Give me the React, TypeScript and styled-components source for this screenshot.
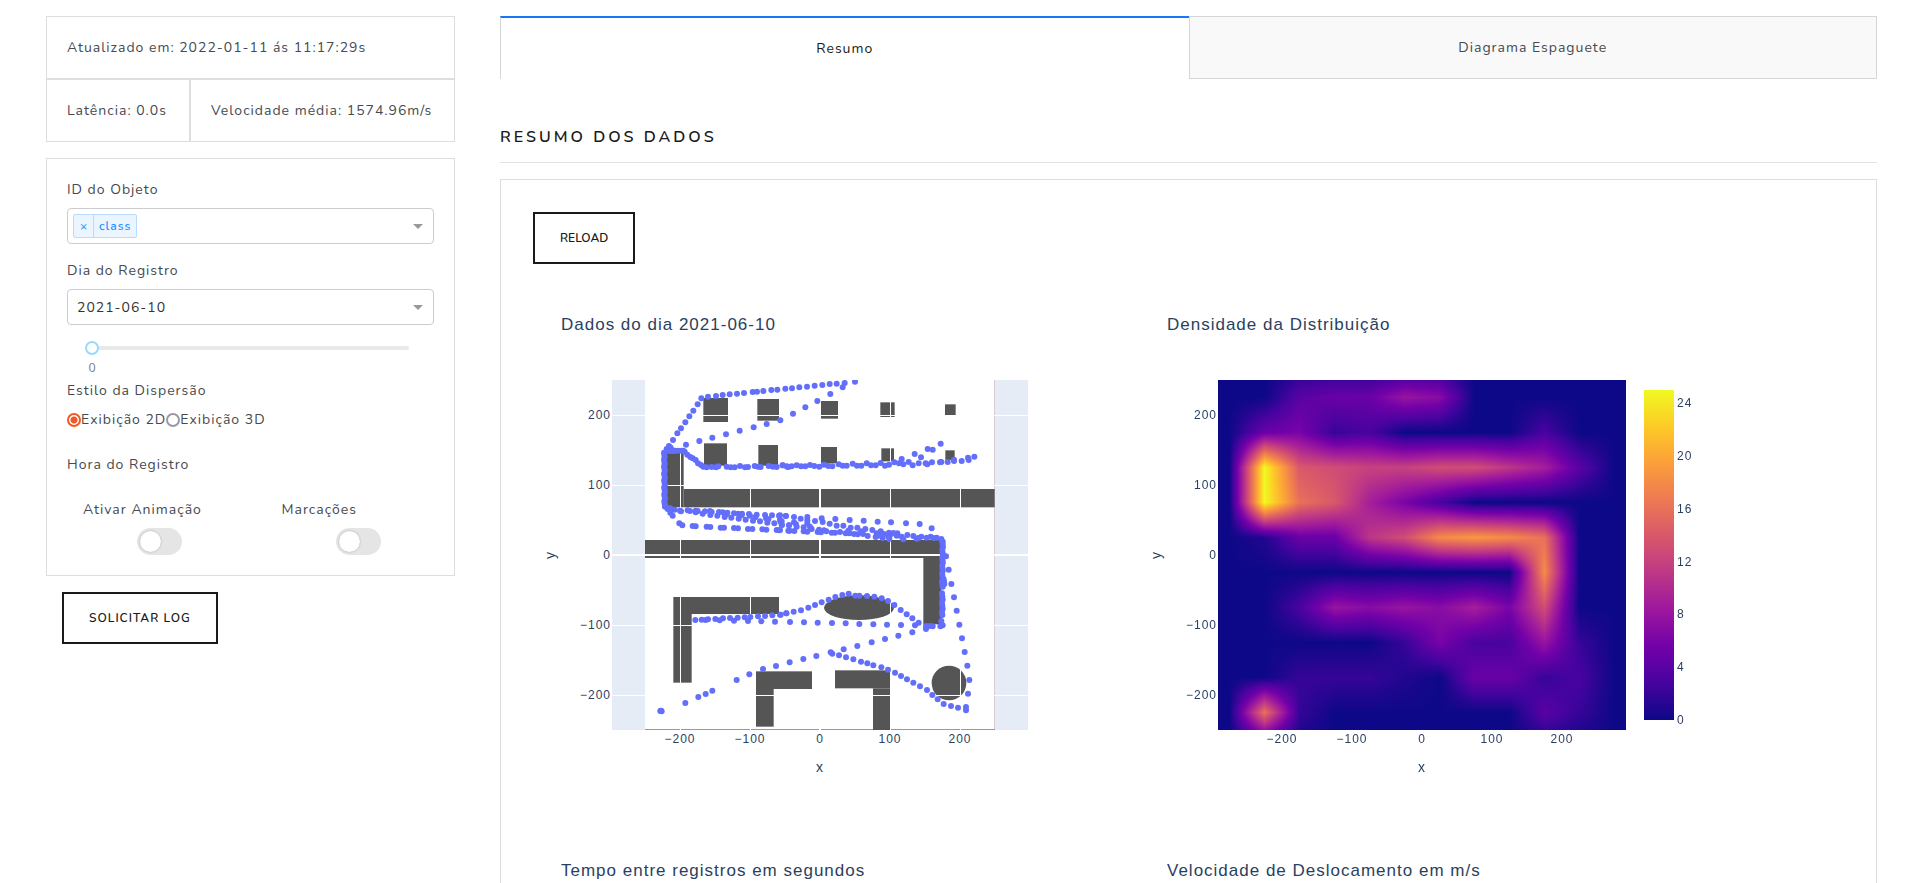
import React, { useLayoutEffect, useRef, useState } from "react";
import styled, { createGlobalStyle } from "styled-components";

const GlobalStyle = createGlobalStyle`
  *, *::before, *::after { box-sizing: border-box; }
  body {
    margin: 0;
    background: #fff;
    color: #454a50;
    font-family: Nunito, "Nunito Sans", Lato, "Open Sans", sans-serif;
    font-size: 14px;
    line-height: 21px;
    letter-spacing: 1px;
  }
`;

const Page = styled.div`
  height: 100vh;
  overflow: auto;
  scrollbar-width: none;
  display: grid;
  grid-template-columns: 409fr 1377fr;
  gap: 45px;
  align-items: start;
  padding: 16px 31px 0 46px;
`;

const Sidebar = styled.aside`
  display: flex;
  flex-direction: column;
  align-items: stretch;
`;

const StatusRow = styled.div`
  display: flex;
`;

const StatusCell = styled.div<{ $grow?: boolean }>`
  flex: ${(p) => (p.$grow ? "1 1 auto" : "0 0 144px")};
  border: 1px solid #dedede;
  padding: 20px;
  white-space: nowrap;
`;

const FilterCard = styled.form`
  margin-top: 16px;
  border: 1px solid #dedede;
  padding: 20px;
`;

const Label = styled.label`
  display: block;
  margin-bottom: 8px;
`;

const Legend = styled.legend`
  padding: 0;
  margin-bottom: 8px;
`;

const Field = styled.div`
  position: relative;
  margin-bottom: 16px;
`;

const SelectBox = styled.div`
  position: relative;
  display: grid;
`;

const Select = styled.select`
  appearance: none;
  width: 100%;
  height: 36px;
  border: 1px solid #ccc;
  border-radius: 4px;
  background: #fff;
  padding: 0 32px 0 9px;
  color: #333;
  font: inherit;
  letter-spacing: inherit;
`;

const Arrow = styled.span`
  position: absolute;
  right: 11px;
  top: 16px;
  border: 5px solid transparent;
  border-top-color: #999;
  border-bottom-width: 0;
  pointer-events: none;
`;

const Chip = styled.span`
  position: absolute;
  left: 6px;
  top: 6px;
  display: flex;
  height: 24px;
  border: 1px solid #b8dbff;
  border-radius: 2px;
  background: #ebf5ff;
  color: #2a91ff;
  font-size: 12px;
  font-weight: 600;
  line-height: 22px;
`;

const ChipRemove = styled.button`
  width: 20px;
  border: 0;
  border-right: 1px solid #b8dbff;
  background: none;
  color: inherit;
  font: inherit;
  padding: 0;
`;

const ChipText = styled.span`
  padding: 0 5px;
`;

const SliderBox = styled.div`
  height: 39px;
  padding: 0 25px 0 18px;
`;

const Slider = styled.input`
  display: block;
  appearance: none;
  width: 100%;
  height: 14px;
  margin: 0;
  background: none;
  &::-webkit-slider-runnable-track {
    height: 4px;
    border-radius: 2px;
    background: #e9e9e9;
  }
  &::-webkit-slider-thumb {
    appearance: none;
    width: 14px;
    height: 14px;
    margin-top: -5px;
    border: 2px solid #96dbfa;
    border-radius: 50%;
    background: #fff;
  }
`;

const SliderMark = styled.output`
  display: block;
  width: 14px;
  padding-top: 5px;
  text-align: center;
  font-size: 12px;
  line-height: 16px;
  color: #777;
  letter-spacing: 0;
`;

const RadioGroup = styled.fieldset`
  border: 0;
  margin: 0 0 24px;
  padding: 0;
  min-width: 0;
`;

const RadioRow = styled.div`
  display: flex;
`;

const RadioLabel = styled.label`
  display: flex;
  align-items: center;
`;

const Radio = styled.input`
  appearance: none;
  width: 14px;
  height: 14px;
  margin: 0;
  border: 2px solid #9b97a6;
  border-radius: 50%;
  background: #fff;
  &:checked {
    border-color: #f15a24;
    background: radial-gradient(circle, #f15a24 0 3px, #fff 4px);
  }
`;

const ToggleSection = styled.fieldset`
  border: 0;
  margin: 0;
  padding: 0;
  min-width: 0;
`;

const ToggleRow = styled.div`
  display: grid;
  grid-template-columns: 1fr 1fr;
  margin: 16px -15px 0;
`;

const ToggleCell = styled.div`
  padding: 0 0 0 31px;
`;

const Toggle = styled.input`
  appearance: none;
  display: block;
  width: 45px;
  height: 27px;
  margin: 0 0 0 54px;
  border-radius: 14px;
  background: #e5e5e5;
  &::before {
    content: "";
    display: block;
    width: 21px;
    height: 21px;
    margin: 3px;
    border-radius: 50%;
    background: #fff;
    box-shadow: 0 0 2px rgba(0, 0, 0, 0.3);
  }
  &:checked { background: #1f78ff; }
  &:checked::before { margin-left: 21px; }
`;

const Button = styled.button<{ $spaced?: boolean }>`
  align-self: flex-start;
  height: 52px;
  border: 2px solid #1a1a1a;
  background: #fff;
  color: #1a1a1a;
  padding: 0 25px;
  font-family: inherit;
  font-size: 12px;
  font-weight: 600;
  line-height: 18px;
  text-transform: uppercase;
  letter-spacing: ${(p) => (p.$spaced ? "1px" : "normal")};
`;

const SidebarAction = styled.div`
  padding: 16px;
`;

const Main = styled.main`
  min-width: 0;
`;

const Tabs = styled.div`
  display: grid;
  grid-template-columns: 1fr 1fr;
`;

const Tab = styled.button<{ $active?: boolean }>`
  height: 63px;
  border: 1px solid #d6d6d6;
  background: ${(p) => (p.$active ? "#fff" : "#f9f9f9")};
  color: ${(p) => (p.$active ? "#1a1a1a" : "#454a50")};
  font: inherit;
  letter-spacing: inherit;
  padding: 0;
  ${(p) =>
    p.$active &&
    "border-top: 2px solid #1975fa; border-right: 0; border-bottom: 0;"}
`;

const SectionTitle = styled.h5`
  margin: 0;
  padding: 46px 0 13px;
  border-bottom: 1px solid #e3e3e3;
  color: #1a1a1a;
  font-size: 16px;
  font-weight: 600;
  line-height: 24px;
  letter-spacing: 3px;
`;

const Card = styled.section`
  margin-top: 16px;
  border: 1px solid #dedede;
  padding: 32px;
`;

const Charts = styled.div`
  display: flex;
  flex-wrap: wrap;
  margin-top: 16px;
`;

const Figure = styled.figure`
  flex: 0 0 606px;
  margin: 0;
  min-height: 546px;
`;

const Caption = styled.figcaption`
  padding: 34px 0 0 28px;
  color: #2a3f5f;
  font-family: "Liberation Sans", Arial, sans-serif;
  font-size: 17px;
  line-height: 22px;
`;

const Plot = styled.svg`
  display: block;
  width: 606px;
  height: 490px;
`;

const Tick = styled.text`
  fill: #2a3f5f;
  font-family: "Liberation Sans", Arial, sans-serif;
  font-size: 12px;
`;

const AxisTitle = styled(Tick)`
  font-size: 14px;
`;

type Point = [number, number];

const shift = (dx: number, dy: number, values: number[]): Point[] => {
  const out: Point[] = [];
  for (let i = 0; i < values.length; i += 2) out.push([values[i] + dx, values[i + 1] + dy]);
  return out;
};

const run = (x0: number, y0: number, x1: number, y1: number, n: number): Point[] =>
  Array.from({ length: n }, (_, i) => [
    x0 + ((x1 - x0) * i) / (n - 1) + (i % 3) - 1,
    y0 + ((y1 - y0) * i) / (n - 1),
  ]);

// Recorded positions, in thirds of a pixel, stored per quadrant of the floor plan.
const positions: Point[] = [
  ...shift(-246, -60, [
    417, 258, 429, 240, 442, 220, 453, 205, 466, 187, 478, 169, 490, 152, 503, 133, 514, 115, 534, 110,
    558, 108, 578, 105, 599, 103, 621, 101, 642, 99, 668, 96, 681, 95, 700, 93, 724, 90, 742, 89, 766, 86,
    710, 192, 671, 202, 629, 212, 588, 223, 547, 233, 508, 243, 468, 254, 751, 181,
    410, 267, 422, 263, 427, 271, 464, 275, 472, 284, 481, 291, 488, 295, 497, 300, 504, 310, 513, 315,
    520, 320, 530, 322, 545, 321, 558, 322, 565, 319, 590, 320, 602, 322, 614, 322, 630, 318, 645, 322,
    654, 321, 674, 318, 684, 320, 692, 321, 716, 318, 729, 320, 740, 321, 758, 316, 770, 319, 775, 321,
    413, 447, 421, 458, 428, 467, 448, 490, 457, 496, 488, 498, 497, 499, 530, 500, 541, 501, 572, 503,
    582, 503, 612, 504, 624, 505, 654, 507, 667, 507, 697, 508, 709, 509, 740, 510, 748, 511, 779, 512,
    421, 445, 434, 449, 450, 452, 473, 451, 480, 453, 497, 452, 503, 453, 525, 454, 540, 453, 545, 456,
    567, 456, 578, 457, 592, 458, 612, 460, 624, 461, 636, 461, 657, 462, 680, 464, 705, 465, 726, 466,
    747, 467, 768, 468, 453, 454, 497, 457, 518, 461, 541, 465, 562, 467, 584, 471, 604, 473, 626, 476,
    647, 479, 669, 482, 690, 484, 712, 488, 733, 490, 755, 494, 777, 496, 676, 472, 708, 475, 715, 478,
    750, 480, 755, 484, 660, 467, 635, 466, 590, 463,
  ]),
  ...shift(504, -60, [
    36, 85, 58, 82, 81, 80, 104, 77, 127, 75, 149, 72, 170, 71, 194, 69, 188, 82, 225, 65, 151, 102,
    112, 123, 76, 142, 39, 161,
    8, 316, 22, 320, 35, 319, 50, 316, 63, 319, 76, 319, 90, 315, 103, 318, 118, 320, 132, 314, 145, 318,
    157, 319, 176, 313, 188, 317, 200, 317, 218, 311, 231, 317, 244, 317, 260, 310, 273, 316, 287, 316,
    302, 309, 315, 317, 327, 314, 343, 307, 357, 310, 370, 313, 386, 306, 398, 316, 416, 310, 437, 310,
    442, 313, 456, 307, 480, 307, 484, 306, 503, 306, 522, 303, 522, 299, 545, 303, 564, 293, 566, 300,
    583, 290, 365, 297, 404, 282, 423, 292, 443, 267, 458, 269, 482, 251,
    0, 510, 25, 512, 43, 513, 71, 514, 82, 515, 113, 516, 123, 517, 139, 514, 155, 518, 165, 518, 180, 516,
    197, 520, 208, 520, 222, 522, 233, 523, 249, 522, 263, 528, 287, 531, 308, 534, 328, 537, 370, 538,
    410, 536, 0, 466, 17, 468, 42, 471, 62, 476, 82, 471, 82, 481, 105, 483, 125, 475, 128, 486, 149, 491,
    166, 477, 170, 497, 190, 497, 209, 480, 212, 503, 232, 503, 251, 482, 256, 507, 277, 510, 293, 485,
    302, 514, 333, 487, 327, 518, 352, 520, 378, 490, 382, 525, 419, 492, 424, 530, 455, 505,
    2, 485, 6, 495, 27, 496, 42, 487, 48, 493, 50, 500, 71, 502, 82, 490, 90, 500, 95, 507, 117, 509,
    132, 511, 205, 512, 243, 514, 290, 520, 312, 522, 330, 526, 350, 527, 365, 530, 400, 528, 415, 534,
    295, 527, 325, 530, 340, 519, 440, 533, 452, 530, 460, 534, 470, 533, 484, 537, 488, 545,
    498, 589, 506, 629, 514, 672, 522, 712, 530, 752,
  ]),
  ...shift(-246, 510, [
    738, 348, 699, 357, 658, 373, 620, 390, 547, 422, 527, 432, 505, 441, 466, 459, 393, 482, 391, 483,
    395, 484, 496, 210, 515, 209, 527, 210, 534, 208, 556, 207, 569, 211, 579, 205, 600, 204, 612, 212,
    623, 203, 644, 202, 654, 213, 661, 201, 684, 199, 694, 214, 705, 198, 727, 196, 735, 215, 750, 194,
    769, 190,
  ]),
  ...shift(504, 510, [
    538, 224, 546, 265, 554, 306, 562, 347, 568, 390, 564, 431, 558, 471, 558, 481, 534, 473, 513, 468,
    491, 462, 473, 448, 457, 435, 441, 420, 420, 409, 400, 398, 381, 388, 363, 378, 345, 368, 324, 359,
    304, 352, 280, 346, 262, 340, 243, 335, 220, 328, 198, 322, 177, 316, 157, 311, 152, 307, 191, 298,
    232, 288, 275, 277, 315, 267, 355, 257, 397, 247, 438, 237, 438, 228, 448, 228, 458, 229, 405, 226,
    416, 218, 397, 205, 380, 193, 362, 180, 343, 165, 324, 153, 305, 145, 283, 140, 261, 138, 238, 137,
    226, 137, 206, 131, 187, 135, 166, 141, 146, 149, 125, 157, 105, 165, 85, 173, 63, 181, 41, 185,
    19, 190, 2, 194, 30, 216, 72, 217, 113, 218, 156, 219, 197, 220, 238, 222, 280, 223, 321, 224,
    363, 225, 109, 318, 70, 327, 29, 337, 484, 213, 488, 226, 481, 229,
  ]),
  ...run(165, 213, 215, 212, 7),
  ...run(157, 218, 158, 377, 24),
  ...run(160, 380, 172, 388, 3),
  ...run(992, 485, 991, 620, 18),
  ...run(991, 640, 991, 705, 8),
  ...run(996, 598, 996, 612, 3),
];

// x, y, width, height of each wall and pillar
const walls: number[][] = [
  [274, 54, 74, 72], [436, 57, 65, 65], [627, 63, 51, 53], [805, 67, 43, 44], [999, 73, 32, 32],
  [276, 190, 69, 67], [439, 195, 59, 62], [627, 201, 48, 49], [808, 205, 38, 39], [1000, 211, 28, 29],
  [159, 218, 56, 164], [215, 327, 933, 55], [99, 480, 895, 54], [934, 534, 54, 199],
  [184, 651, 317, 51], [184, 702, 55, 206], [432, 874, 168, 53], [432, 927, 53, 113],
  [669, 871, 165, 54], [783, 925, 51, 125],
];

const xTicks = [-200, -100, 0, 100, 200];
const yTicks = [200, 100, 0, -100, -200];
const fmt = (v: number) => String(v).replace("-", "\u2212");

function Axes({ center }: { center: number }) {
  return (
    <>
      {yTicks.map((v) => (
        <Tick key={v} x={78} y={223 - v * 0.7} textAnchor="end">{fmt(v)}</Tick>
      ))}
      {xTicks.map((v) => (
        <Tick key={v} x={center + v * 0.7} y={407} textAnchor="middle">{fmt(v)}</Tick>
      ))}
      <AxisTitle x={center} y={436} textAnchor="middle">x</AxisTitle>
      <AxisTitle transform="translate(22 219) rotate(-90)" textAnchor="middle">y</AxisTitle>
    </>
  );
}

function ScatterPlot() {
  return (
    <Plot viewBox="0 0 606 490" role="img" aria-label="Dados do dia 2021-06-10">
      <svg x="79" y="44" width="416" height="350" viewBox="0 0 1248 1050">
        <rect width="1248" height="1050" fill="#e5ecf6" />
        <rect x="99" width="1047" height="1050" fill="#fff" />
        <rect x="1146" width="3" height="1050" fill="#d6ccd2" />
        <rect x="99" y="1047" width="1050" height="3" fill="#999" />
        <g fill="#555">
          {walls.map(([x, y, w, h], i) => (
            <rect key={i} x={x} y={y} width={w} height={h} />
          ))}
          <ellipse cx="741" cy="683" rx="105" ry="37" />
          <circle cx="1011" cy="909" r="52" />
        </g>
        <g stroke="#fff" strokeWidth="3">
          {[205, 415, 835, 1045].map((x) => <path key={x} d={`M${x + 0.5} 0V1050`} />)}
          {[106, 316, 736, 946].map((y) => <path key={y} d={`M0 ${y + 0.5}H1248`} />)}
          <path d="M624 0V1050M0 525H1248" strokeWidth="6" />
        </g>
        <g fill="#636efa">
          {positions.map(([x, y], i) => <circle key={i} cx={x} cy={y} r="9" />)}
        </g>
      </svg>
      <Axes center={287} />
    </Plot>
  );
}

const plasma = [
  [13, 8, 135], [70, 3, 159], [114, 1, 168], [156, 23, 158], [189, 55, 134],
  [216, 87, 107], [237, 121, 83], [251, 159, 58], [253, 202, 38], [240, 249, 33],
];

// Counts per 50-unit bin; columns from x = -325 to 325, rows from y = 275 down to -275.
const density = [
  [0, 0, 0, 0, 0, 0, 0, 0, 0, 0, 0, 0, 0, 0],
  [0, 0, 0, 4, 5, 5, 8, 7, 0, 0, 0, 0, 0, 0],
  [0, 0, 5, 6, 2, 3, 0, 0, 0, 0, 3, 0, 0, 0],
  [0, 0, 25, 14, 13, 12, 12, 13, 13, 11, 9, 4, 0, 0],
  [0, 0, 25, 16, 14, 9, 6, 3, 0, 0, 0, 0, 0, 0],
  [0, 0, 1, 5, 5, 11, 13, 18, 19, 18, 16, 0, 0, 0],
  [0, 0, 0, 0, 0, 0, 0, 0, 0, 0, 18, 0, 0, 0],
  [0, 0, 0, 3, 8, 7, 8, 7, 9, 6, 13, 0, 0, 0],
  [0, 0, 0, 0, 0, 0, 2, 6, 3, 3, 8, 2, 0, 0],
  [0, 0, 0, 2, 2, 2, 1, 0, 5, 5, 2, 3, 0, 0],
  [0, 0, 16, 2, 0, 0, 0, 0, 0, 0, 4, 2, 0, 0],
  [0, 0, 0, 0, 0, 0, 0, 0, 0, 0, 0, 0, 0, 0],
];

function colorAt(z: number): number[] {
  const t = Math.max(0, Math.min(8.999, (z / 25) * 9));
  const i = Math.floor(t);
  return plasma[i].map((c, k) => c + (plasma[i + 1][k] - c) * (t - i));
}

const HeatCanvas = styled.canvas`
  display: block;
`;

function Heatmap({ width, height }: { width: number; height: number }) {
  const ref = useRef<HTMLCanvasElement>(null);
  useLayoutEffect(() => {
    const ctx = ref.current?.getContext("2d");
    if (!ctx) return;
    const image = ctx.createImageData(width, height);
    for (let py = 0; py < height; py++) {
      const gy = (275 - (height / 2 - py - 0.5) / 0.7) / 50;
      const r = Math.floor(gy);
      const fy = gy - r;
      for (let px = 0; px < width; px++) {
        const gx = ((px + 0.5 - width / 2) / 0.7 + 325) / 50;
        const c = Math.floor(gx);
        const fx = gx - c;
        const top = density[r][c] * (1 - fx) + density[r][c + 1] * fx;
        const bottom = density[r + 1][c] * (1 - fx) + density[r + 1][c + 1] * fx;
        const rgb = colorAt(top * (1 - fy) + bottom * fy);
        image.data.set([rgb[0], rgb[1], rgb[2], 255], (py * width + px) * 4);
      }
    }
    ctx.putImageData(image, 0, 0);
  }, [width, height]);
  return <HeatCanvas ref={ref} width={width} height={height} />;
}

function DensityPlot() {
  return (
    <Plot viewBox="0 0 606 490" role="img" aria-label="Densidade da Distribuição">
      <defs>
        <linearGradient id="plasma" x1="0" y1="1" x2="0" y2="0">
          {plasma.map((c, i) => (
            <stop key={i} offset={i / 9} stopColor={`rgb(${c.join(",")})`} />
          ))}
        </linearGradient>
      </defs>
      <foreignObject x="79" y="44" width="408" height="350">
        <Heatmap width={408} height={350} />
      </foreignObject>
      <rect x="505" y="54" width="30" height="330" fill="url(#plasma)" />
      {[0, 4, 8, 12, 16, 20, 24].map((v) => (
        <Tick key={v} x={538} y={388 - v * 13.2}>{v}</Tick>
      ))}
      <Axes center={283} />
    </Plot>
  );
}

export default function App() {
  const [mode, setMode] = useState("2d");
  const [step, setStep] = useState(0);
  return (
    <>
      <GlobalStyle />
      <Page>
        <Sidebar>
          <StatusRow>
            <StatusCell $grow>Atualizado em: 2022-01-11 ás 11:17:29s</StatusCell>
          </StatusRow>
          <StatusRow>
            <StatusCell>Latência: 0.0s</StatusCell>
            <StatusCell $grow>Velocidade média: 1574.96m/s</StatusCell>
          </StatusRow>
          <FilterCard>
            <Field>
              <Label htmlFor="object">ID do Objeto</Label>
              <SelectBox>
                <Select id="object" defaultValue="">
                  <option value="" aria-label="class" />
                </Select>
                <Chip>
                  <ChipRemove type="button" aria-label="Remover class">×</ChipRemove>
                  <ChipText>class</ChipText>
                </Chip>
                <Arrow />
              </SelectBox>
            </Field>
            <Field>
              <Label htmlFor="day">Dia do Registro</Label>
              <SelectBox>
                <Select id="day">
                  <option>2021-06-10</option>
                </Select>
                <Arrow />
              </SelectBox>
            </Field>
            <SliderBox>
              <Slider
                id="step"
                type="range"
                min={0}
                max={10}
                value={step}
                aria-label="Intervalo"
                onChange={(e) => setStep(Number(e.target.value))}
              />
              <SliderMark htmlFor="step">{step}</SliderMark>
            </SliderBox>
            <RadioGroup>
              <Legend>Estilo da Dispersão</Legend>
              <RadioRow>
                <RadioLabel>
                  <Radio type="radio" name="mode" checked={mode === "2d"} onChange={() => setMode("2d")} />
                  Exibição 2D
                </RadioLabel>
                <RadioLabel>
                  <Radio type="radio" name="mode" checked={mode === "3d"} onChange={() => setMode("3d")} />
                  Exibição 3D
                </RadioLabel>
              </RadioRow>
            </RadioGroup>
            <ToggleSection>
              <Legend>Hora do Registro</Legend>
              <ToggleRow>
                <ToggleCell>
                  <Label htmlFor="animate">Ativar Animação</Label>
                  <Toggle id="animate" type="checkbox" role="switch" />
                </ToggleCell>
                <ToggleCell>
                  <Label htmlFor="marks">Marcações</Label>
                  <Toggle id="marks" type="checkbox" role="switch" />
                </ToggleCell>
              </ToggleRow>
            </ToggleSection>
          </FilterCard>
          <SidebarAction>
            <Button type="button" $spaced>Solicitar log</Button>
          </SidebarAction>
        </Sidebar>
        <Main>
          <Tabs role="tablist">
            <Tab type="button" role="tab" aria-selected $active>Resumo</Tab>
            <Tab type="button" role="tab" aria-selected={false}>Diagrama Espaguete</Tab>
          </Tabs>
          <SectionTitle>RESUMO DOS DADOS</SectionTitle>
          <Card>
            <Button type="button">Reload</Button>
            <Charts>
              <Figure>
                <Caption>Dados do dia 2021-06-10</Caption>
                <ScatterPlot />
              </Figure>
              <Figure>
                <Caption>Densidade da Distribuição</Caption>
                <DensityPlot />
              </Figure>
              <Figure>
                <Caption>Tempo entre registros em segundos</Caption>
              </Figure>
              <Figure>
                <Caption>Velocidade de Deslocamento em m/s</Caption>
              </Figure>
            </Charts>
          </Card>
        </Main>
      </Page>
    </>
  );
}
